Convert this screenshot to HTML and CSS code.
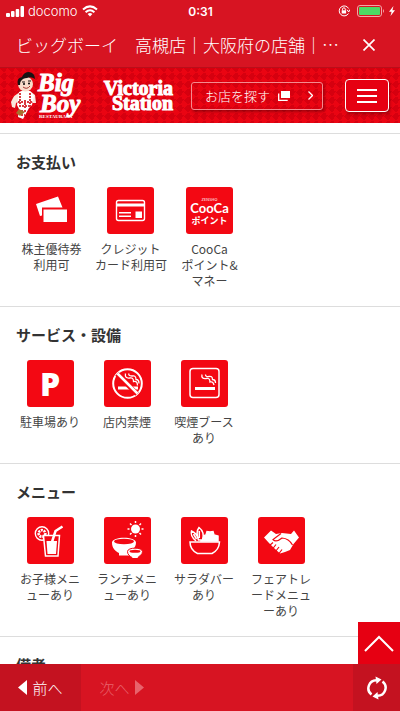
FILE: index.html
```html
<!DOCTYPE html>
<html lang="ja">
<head>
    <meta charset="UTF-8">
    <meta name="viewport" content="width=device-width, initial-scale=1.0">
    <title>ビッグボーイ　高槻店｜大阪府の店舗｜ビッグボーイ</title>

    <link rel="stylesheet" href="styles.css">
</head>
<body>
    <div class="app-bar">
        <div class="status">
            <div class="status-left">
                <svg width="18" height="11" viewBox="0 0 18 11" fill="#fff"><rect x="0" y="7" width="4" height="4" rx="1"/><rect x="5" y="5" width="3.500" height="6" rx="1"/><rect x="9.700" y="3" width="3.500" height="8" rx="1"/><rect x="14.500" y="0" width="3.500" height="11" rx="1"/></svg>
                <span>docomo</span>
                <svg width="16" height="12" viewBox="0 0 16 12" fill="none" stroke="#fff" stroke-width="2"><path d="M1 4.500Q8-1.800 15 4.500M3.600 7.200Q8 3.200 12.400 7.200"/><path d="M5.600 9Q8 6.800 10.400 9L8 11.600Z" fill="#fff" stroke="none"/></svg>
            </div>
            <time class="clock">0:31</time>
            <div class="status-right">
                <svg width="12" height="12" viewBox="0 0 12 12" fill="none" stroke="#fff"><path d="M10.600 3.500A5 5 0 1 0 10.500 8.500M11.900 4.500L10.700 7L9 4.700"/><path d="M4.500 5.500V4.200a1.400 1.400 0 0 1 2.800 0V5.500"/><rect x="3.700" y="5.300" width="4.400" height="3.200" fill="#fff" stroke="none"/></svg>
                <svg width="28" height="12" viewBox="0 0 28 12"><rect x=".5" y=".5" width="24" height="11" rx="2.500" fill="none" stroke="#f4a4a8"/><rect x="2" y="2" width="21" height="8" rx="1" fill="#4cd964"/><path d="M26 4q2 2 0 4z" fill="#f4a4a8"/></svg>
                <svg width="6" height="10" viewBox="0 0 6 10"><path d="M4.500 0L0 5.700H2.600L1.500 10L6 4.200H3.400Z" fill="#fff"/></svg>
            </div>
        </div>
        <div class="title-bar">
            <p class="page-title">ビッグボーイ　高槻店｜大阪府の店舗｜…</p>
            <button class="close" aria-label="閉じる">
                <svg width="12" height="12" viewBox="0 0 12 12" stroke="#fff" stroke-width="1.700"><path d="M.5.5l11 11M11.500.5l-11 11"/></svg>
            </button>
        </div>
    </div>

    <header class="site-header">
        <a href="#" class="logo-bigboy">
            <svg class="mascot" width="28" height="48" viewBox="0 0 28 48">
                <path d="M11 20Q4 22 1 30L2 35L5 36L6 31L11 28M20 19L25 23L26 31L23 31" fill="#fae6dc"/>
                <path d="M9 20Q14 17 20 19L24 24L22 33L19 36L13 47L8 45L9 37L7 33Z" fill="#fff"/>
                <path d="M10 21v15M15 28v9M20 21v14M8 30h15M9 34h11M11 39h6M11 43h4" stroke="#d93a40" stroke-width="2" stroke-dasharray="2 1"/>
                <path d="M9 37l-3 4 4 3 5-4z" fill="#a7702d"/>
                <ellipse cx="15.500" cy="12" rx="7.500" ry="7.500" fill="#f9dccb"/>
                <path d="M8 13Q6 6 12 5Q14 0 19 0Q25 1 25 7Q21 4 17 6Q13 6 11 9Q10 10 10 13Z" fill="#171313"/>
                <path d="M12 10h3M18 9h3" stroke="#171313"/><circle cx="14" cy="12" r="1"/><circle cx="19" cy="11.500" r="1"/>
                <path d="M13 15q4 3 7-1" fill="none" stroke="#a4322d"/>
            </svg>
            <span class="bigboy-name">
                <span class="big">Big</span>
                <span class="boy">Boy</span>
                <small>RESTAURANT</small>
            </span>
        </a>
        <a href="#" class="logo-victoria">Victoria<br>Station</a>
        <a href="#" class="shop-search">
            お店を探す
            <svg width="12" height="10" viewBox="0 0 12 10"><path d="M3 0h9v7H3z" fill="#fff"/><path d="M.7 2.500v6.800h9" fill="none" stroke="#fff" stroke-width="1.300"/></svg>
            <svg class="arrow" width="5" height="9" viewBox="0 0 5 9" fill="none" stroke="#fff" stroke-width="1.300"><path d="M.5.5l4 4-4 4"/></svg>
        </a>
        <button class="menu" aria-label="メニュー">
            <svg width="20" height="14" viewBox="0 0 20 14" stroke="#fff" stroke-width="2"><path d="M0 1h20M0 7h20M0 13h20"/></svg>
        </button>
    </header>

    <main>
        <section class="wide">
            <h2>お支払い</h2>
            <ul>
                <li>
                    <svg class="icon" viewBox="0 0 47 47" fill="#fff"><path d="M8 17L30 9.500L34.500 20.500H14V28.500L12 29Z"/><path d="M15.500 22.500H39V35H15.500Z"/></svg>
                    株主優待券<br>利用可
                </li>
                <li>
                    <svg class="icon" viewBox="0 0 47 47" fill="#fff"><rect x="9.500" y="13.500" width="28" height="20" rx="2" fill="none" stroke="#fff" stroke-width="1.400"/><path d="M9.500 16.500h28v3h-28zM12 25h12v1.500H12zM12 28.500h12V30H12zM28.500 24.500H35V31h-6.500z"/></svg>
                    クレジット<br>カード利用可
                </li>
                <li>
                    <span class="icon cooca"><small>ZENSHO</small><b>CooCa</b><strong>ポイント</strong></span>
                    CooCa<br>ポイント&amp;<br>マネー
                </li>
            </ul>
        </section>

        <section>
            <h2>サービス・設備</h2>
            <ul>
                <li>
                    <span class="icon parking">P</span>
                    駐車場あり
                </li>
                <li>
                    <svg class="icon" viewBox="0 0 47 47" fill="none" stroke="#fff"><circle cx="23.500" cy="23.500" r="14.300" stroke-width="2"/><path d="M14 28H34" stroke-width="3"/><path d="M13 14L33 34" stroke="#f30813" stroke-width="5"/><path d="M13.500 13.500L33.500 33.500" stroke-width="2.500"/><path d="M21.500 13.500q-1 5 4 4.500q4-1 4 3.500q4-1 4 4M25 13.500q-1 2.500 3 2.500q4-1 4 3.500q3 0 3 4" stroke-width="1.300"/></svg>
                    店内禁煙
                </li>
                <li>
                    <svg class="icon" viewBox="0 0 47 47" fill="none" stroke="#fff"><rect x="9" y="8.500" width="29" height="29" rx="3" stroke-width="1.500"/><path d="M14 28.500H34" stroke-width="3"/><path d="M21 14.500q-1 4.500 4 4q4-1 4 3.500q3-1 4 3M24.500 14.500q0 2.500 3 2q4-1 4 3q3 0 3 3.500" stroke-width="1.300"/></svg>
                    喫煙ブース<br>あり
                </li>
            </ul>
        </section>

        <section>
            <h2>メニュー</h2>
            <ul>
                <li>
                    <svg class="icon" viewBox="0 0 47 47" fill="none" stroke="#fff"><circle cx="15" cy="16.500" r="6.700" stroke-width="1.400"/><circle cx="15" cy="16.500" r="3.300" stroke-width="2.700" stroke-dasharray="2 .8"/><path d="M16.500 18.500H32.500L31 39H18.500Z" fill="#f30813" stroke-width="1.500"/><path d="M19.500 24H30L29 37H20.500Z" fill="#fff" stroke="none"/><path d="M25 25L28.500 14L35.500 9.500" stroke-width="2.500"/></svg>
                    お子様メニ<br>ューあり
                </li>
                <li>
                    <svg class="icon" viewBox="0 0 47 47" fill="#fff"><circle cx="31.500" cy="12" r="4.500"/><path d="M31.500 4v2M31.500 18v2M23.500 12h2M37.500 12h2M26 6.500l1.500 1.500M37 6.500L35.500 8M26 17.500l1.500-1.500M37 17.500L35.500 16" stroke="#fff" stroke-width="1.500"/><path d="M8 25.500C8 19 32 19 32 25.500C32 31 27 34 25 36V38.500H15V36C11 34 8 31 8 25.500Z"/><ellipse cx="20" cy="24.500" rx="10" ry="2.700" fill="#f30813"/><path d="M23.500 34.500C23.500 30 38.500 30 38.500 34.500C38.500 38 35 39 34 40.500V41.500H28V40.500C26 39 23.500 38 23.500 34.500Z" stroke="#f30813"/><ellipse cx="31" cy="34.300" rx="5.500" ry="1.500" fill="#f30813"/></svg>
                    ランチメニ<br>ューあり
                </li>
                <li>
                    <svg class="icon" viewBox="0 0 47 47" fill="none" stroke="#fff" stroke-width="1.500"><path d="M20 24L21 19L25 18L26 14.500L29 15L32 14.500L33 18L37 19L37 24Z" fill="#fff"/><path d="M17.500 23Q14.500 15 18 10.500Q24 15 21.500 23ZM15 24Q9 19 10.500 14Q16 16 17.500 23M18.300 14V21M12.500 17L15.500 22" fill="#f30813"/><path d="M9 25H38.500Q38 33 31 36.500H16.500Q9 33 9 25Z" fill="#f30813"/></svg>
                    サラダバー<br>あり
                </li>
                <li>
                    <svg class="icon" viewBox="0 0 47 47" fill="#fff"><path d="M6 20.500L13 13.500L18 17L24 16L33 17L36 13.500L41 20.500L35.500 27L32 33L27 35L22 36.500L16 31L11 26Z"/><path d="M23 16.500L15 22.500Q18 26 24 21Q31 21.500 34.500 28M11.500 28.500L15 25.500M14.500 32L18 27.500M17.500 34.500L21 30M21 36.500L24 32.500" fill="none" stroke="#f30813" stroke-width="1.200"/></svg>
                    フェアトレ<br>ードメニュ<br>ーあり
                </li>
            </ul>
        </section>

        <section>
            <h2>備考</h2>
        </section>
    </main>

    <footer>
        <a href="#" class="page-top" aria-label="ページの先頭へ">
            <svg width="30" height="17" viewBox="0 0 30 17" fill="none" stroke="#fff" stroke-width="2"><path d="M1 16L15 2L29 16"/></svg>
        </a>
        <nav class="toolbar">
            <button class="prev"><svg width="9" height="15" viewBox="0 0 9 15"><path d="M9 0V15L0 7.500Z" fill="#fff"/></svg>前へ</button>
            <button class="next" disabled>次へ<svg width="9" height="15" viewBox="0 0 9 15"><path d="M0 0V15L9 7.500Z" fill="#e8636c"/></svg></button>
            <button class="reload" aria-label="再読み込み">
                <svg width="20" height="24" viewBox="0 0 20 24" fill="none" stroke="#fff" stroke-width="2.500"><path d="M4.500 18.500A8 8 0 0 1 9.500 4.200M15.500 5.500A8 8 0 0 1 10.500 19.800"/><path d="M8.500 .5L14.500 3.500L9.500 8ZM11.500 23.500L5.500 20.500L10.500 16Z" fill="#fff" stroke="none"/></svg>
            </button>
        </nav>
    </footer>
</body>
</html>
```

FILE: styles.css
```css
* {
    box-sizing: border-box;
}

body {
    font-family: "Noto Sans CJK JP", sans-serif;
    color: #333;
    background-color: #fff;
    margin: 0;
    height: 100vh;
    display: flex;
    flex-direction: column;
    overflow: hidden;
}

a {
    color: #fff;
    text-decoration: none;
}

button {
    font-family: inherit;
    color: #fff;
    background: none;
    border: none;
    padding: 0;
    display: flex;
    align-items: center;
    justify-content: center;
}

svg {
    flex: none;
}

.app-bar {
    background-color: #d71422;
    color: #fff;
    border-bottom: 1px solid #b90f1a;
}

.status {
    display: grid;
    grid-template-columns: 1fr auto 1fr;
    align-items: center;
    height: 22px;
    padding: 0 5px 0 6px;
    font-family: Inter, sans-serif;
    font-size: 12px;
}

.status-left,
.status-right {
    display: flex;
    align-items: center;
    gap: 4px;
}

.status-left span {
    font-size: 13px;
    font-weight: 300;
}

.status-right {
    justify-content: flex-end;
    gap: 7px;
}

.status-right svg:last-child {
    margin-left: -3px;
}

.clock {
    font-weight: 600;
}

.title-bar {
    display: flex;
    align-items: center;
    justify-content: space-between;
    height: 45px;
    padding: 0 25px 0 16px;
}

.page-title {
    margin: 0;
    font-size: 17px;
    font-weight: 300;
    white-space: nowrap;
}

/* site header */
.site-header {
    display: flex;
    align-items: center;
    height: 55px;
    flex: none;
    padding: 0 11px 0 10px;
    background: repeating-conic-gradient(from 45deg, #ea0412 0 25%, #d6000f 0 50%) 0 0 / 8px 8px;
}

.logo-bigboy {
    display: flex;
    align-items: center;
    width: 88px;
}

.bigboy-name {
    display: flex;
    flex-direction: column;
    font-family: "Liberation Serif", serif;
    font-weight: bold;
    font-style: italic;
    font-size: 25px;
    line-height: 21px;
    -webkit-text-stroke: 1px #fff;
}

.bigboy-name small {
    padding-left: 1px;
    font-size: 5px;
    font-style: normal;
    line-height: 5px;
    -webkit-text-stroke: 0;
}

.boy {
    padding-left: 2px;
}

.logo-victoria {
    width: 75px;
    font-family: "Liberation Serif", serif;
    font-weight: bold;
    font-size: 20px;
    line-height: 15px;
    text-align: right;
    -webkit-text-stroke: 1px #fff;
}

.shop-search {
    display: flex;
    align-items: center;
    gap: 8px;
    width: 132px;
    height: 28px;
    margin-left: 18px;
    padding: 0 9px 0 13px;
    border: 1px solid #f58a8f;
    border-radius: 3px;
    box-shadow: 1px 2px 3px rgba(0, 0, 0, 0.3);
    font-size: 13px;
    font-weight: 300;
    white-space: nowrap;
}

.arrow {
    margin-left: auto;
}

.menu {
    width: 44px;
    height: 33px;
    margin-left: auto;
    background-color: #e60012;
    border: 1px solid #fff;
    border-radius: 4px;
    box-shadow: 1px 2px 3px rgba(0, 0, 0, 0.3);
}

/* shop information */
main {
    flex: 1;
    min-height: 0;
    padding-top: 10px;
    overflow: hidden;
}

section {
    border-top: 1px solid #ddd;
    padding: 16px 16px 17px;
}

h2 {
    margin: 0 0 13px;
    font-size: 15px;
    font-weight: bold;
    line-height: 24px;
}

ul {
    display: grid;
    grid-template-columns: repeat(4, 68px);
    gap: 9px;
    margin: 0;
    padding: 0;
    list-style: none;
}

.wide ul {
    grid-template-columns: repeat(4, 71px);
    gap: 8px;
}

li {
    color: #444;
    font-size: 12px;
    line-height: 16px;
    text-align: center;
    white-space: nowrap;
}

.icon {
    display: block;
    width: 47px;
    height: 47px;
    margin: 0 auto 7px;
    background-color: #f30813;
    border-radius: 3px;
    color: #fff;
}

.parking {
    font-family: "Open Sans", sans-serif;
    font-size: 32px;
    font-weight: 800;
    line-height: 47px;
}

.cooca {
    display: flex;
    flex-direction: column;
    align-items: center;
    padding-top: 9px;
}

.cooca small {
    font-size: 4px;
    line-height: 6px;
}

.cooca b {
    font-family: Lato, sans-serif;
    font-size: 13px;
    line-height: 12px;
}

.cooca strong {
    font-size: 9px;
    line-height: 13px;
}

/* bottom bar */
footer {
    position: relative;
    flex: none;
}

.page-top {
    position: absolute;
    right: 0;
    bottom: 100%;
    display: flex;
    align-items: center;
    justify-content: center;
    width: 42px;
    height: 42px;
    background-color: #e60012;
}

.toolbar {
    display: flex;
    height: 47px;
    background-color: #d71422;
}

.toolbar button {
    gap: 5px;
    width: 81px;
    font-size: 15px;
    font-weight: 300;
}

.toolbar .prev,
.toolbar .reload {
    background-color: #c41220;
}

.toolbar .next {
    color: #e8636c;
}

.toolbar .reload {
    width: 47px;
    margin-left: auto;
}
```
